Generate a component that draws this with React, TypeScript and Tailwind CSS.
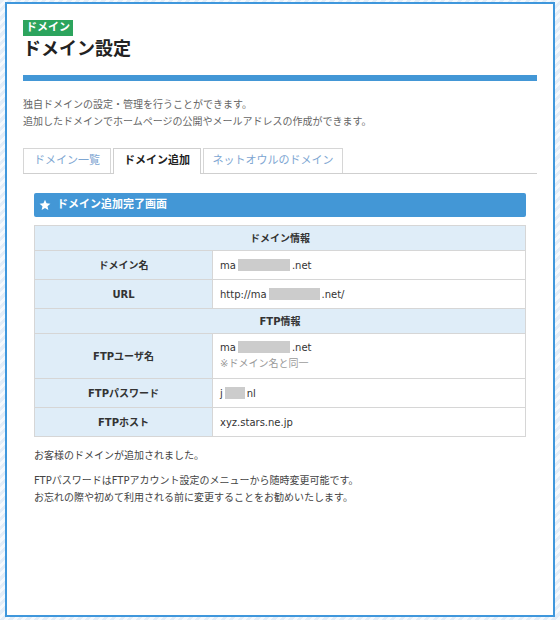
import React from "react";

const FONT = { fontFamily: '"DejaVu Sans", "Noto Sans CJK JP", sans-serif' };

function Blur({ w }: { w: string }) {
  return <span className={`inline-block ${w} h-[12px] bg-[#cccccc] align-[-2px] mx-[2px]`} />;
}

function Star() {
  return (
    <svg viewBox="0 0 24 24" className="w-[12px] h-[12px] fill-white">
      <path d="M12 1.5l3.1 7.1 7.7.7-5.8 5.1 1.7 7.6L12 18.1 5.3 22l1.7-7.6L1.2 9.3l7.7-.7z" />
    </svg>
  );
}

function Row({ label, children, h }: { label: string; children: React.ReactNode; h: string }) {
  return (
    <div className={`flex border-t border-[#d6d6d6] ${h}`}>
      <div className="w-[178px] shrink-0 bg-[#dfedf8] border-r border-[#d6d6d6] flex items-center justify-center font-bold text-[#333]">
        {label}
      </div>
      <div className="flex-1 flex flex-col justify-center pl-[7px] text-[#333]">{children}</div>
    </div>
  );
}

function Head({ title }: { title: string }) {
  return (
    <div className="border-t border-[#d6d6d6] bg-[#dfedf8] h-[25px] flex items-center justify-center font-bold text-[#333]">
      {title}
    </div>
  );
}

export default function App() {
  return (
    <div
      style={FONT}
      className="w-[560px] h-[620px] pt-[2px] pl-[5px] bg-[repeating-linear-gradient(135deg,#e2edf8_0px,#e2edf8_3px,#f5f9fd_3px,#f5f9fd_6px)]"
    >
      <div className="w-[550px] h-[615px] bg-white border-2 border-[#3f97dc] px-4 pt-4">
        {/* Title */}
        <div className="w-fit bg-[#2ca45d] text-white text-[11px] font-bold leading-[16px] px-[3px]">
          ドメイン
        </div>
        <h1 className="text-[18px] font-bold text-[#222] leading-[22px] mt-[2px]">ドメイン設定</h1>
        <div className="h-[6px] bg-[#4397d6] mt-[15px]" />

        <div className="mt-[15px] text-[10px] leading-[17px] text-[#666]">
          <p>独自ドメインの設定・管理を行うことができます。</p>
          <p>追加したドメインでホームページの公開やメールアドレスの作成ができます。</p>
        </div>

        {/* Tabs */}
        <div className="mt-[18px] flex items-end gap-[2px] border-b border-[#cfcfcf] h-[26px]">
          <div className="w-[88px] h-[25px] border border-b-0 border-[#d6d6d6] flex items-center justify-center text-[11px] text-[#7ea6d2]">
            ドメイン一覧
          </div>
          <div className="w-[88px] h-[26px] -mb-px bg-white border border-b-0 border-[#cfcfcf] flex items-center justify-center text-[11px] font-bold text-[#222]">
            ドメイン追加
          </div>
          <div className="w-[140px] h-[25px] border border-b-0 border-[#d6d6d6] flex items-center justify-center text-[11px] text-[#7ea6d2]">
            ネットオウルのドメイン
          </div>
        </div>

        {/* Content */}
        <div className="px-[11px] pt-[19px]">
          <div className="h-[24px] bg-[#4397d6] rounded-[2px] flex items-center gap-[6px] pl-[5px] text-white text-[11px] font-bold">
            <Star />
            <span>ドメイン追加完了画面</span>
          </div>

          <div className="mt-[8px] border-x border-b border-[#d6d6d6] text-[10px]">
            <Head title="ドメイン情報" />
            <Row label="ドメイン名" h="h-[29px]">
              <div>
                ma<Blur w="w-[52px]" />.net
              </div>
            </Row>
            <Row label="URL" h="h-[29px]">
              <div>
                http://ma<Blur w="w-[51px]" />.net/
              </div>
            </Row>
            <Head title="FTP情報" />
            <Row label="FTPユーザ名" h="h-[45px]">
              <div className="leading-[16px]">
                ma<Blur w="w-[52px]" />.net
              </div>
              <div className="leading-[16px] text-[#999]">※ドメイン名と同一</div>
            </Row>
            <Row label="FTPパスワード" h="h-[29px]">
              <div>
                j<Blur w="w-[20px]" />nl
              </div>
            </Row>
            <Row label="FTPホスト" h="h-[29px]">
              <div>xyz.stars.ne.jp</div>
            </Row>
          </div>

          <div className="mt-[10px] text-[10px] leading-[17px] text-[#444]">
            <p>お客様のドメインが追加されました。</p>
            <p className="mt-[8px]">FTPパスワードはFTPアカウント設定のメニューから随時変更可能です。</p>
            <p>お忘れの際や初めて利用される前に変更することをお勧めいたします。</p>
          </div>
        </div>
      </div>
    </div>
  );
}
